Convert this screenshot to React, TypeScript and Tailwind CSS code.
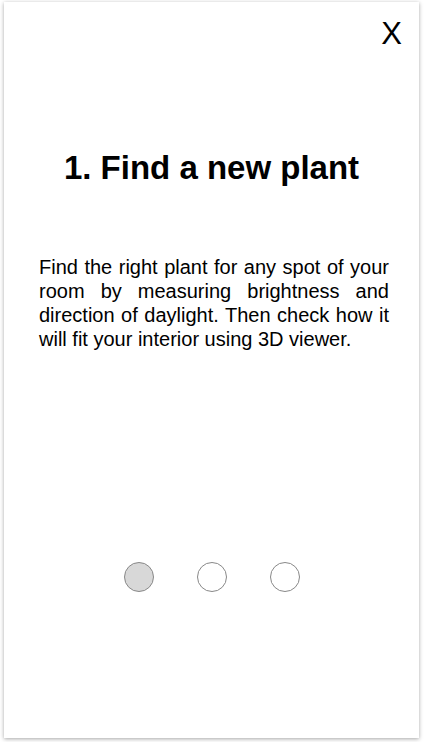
export default function App() {
  return (
    <div className="w-[424px] h-[742px] bg-white pt-[2px] pl-[4px]" style={{ fontFamily: '"Liberation Sans", Arial, sans-serif' }}>
      <div className="w-[415px] h-[736px] bg-white shadow-[0_1px_4px_rgba(0,0,0,0.35)] flex flex-col">
        <div className="flex justify-end pr-[17px] pt-[14px] h-[50px]">
          <span className="text-[31px] leading-[36px] text-black">X</span>
        </div>
        <h1 className="mt-[96px] text-center text-[33px] leading-[40px] font-bold text-black">1. Find a new plant</h1>
        <p className="mt-[67px] pl-[35px] pr-[30px] text-[20px] leading-[24px] text-black text-justify">
          Find the right plant for any spot of your room by measuring brightness and direction of daylight. Then check how it will fit your interior using 3D viewer.
        </p>
        <div className="mt-[211px] flex justify-center gap-[43px]">
          <div className="w-[30px] h-[30px] rounded-full border-[1.5px] border-[#888888] bg-[#d8d8d8]" />
          <div className="w-[30px] h-[30px] rounded-full border-[1.5px] border-[#888888] bg-white" />
          <div className="w-[30px] h-[30px] rounded-full border-[1.5px] border-[#888888] bg-white" />
        </div>
      </div>
    </div>
  );
}
